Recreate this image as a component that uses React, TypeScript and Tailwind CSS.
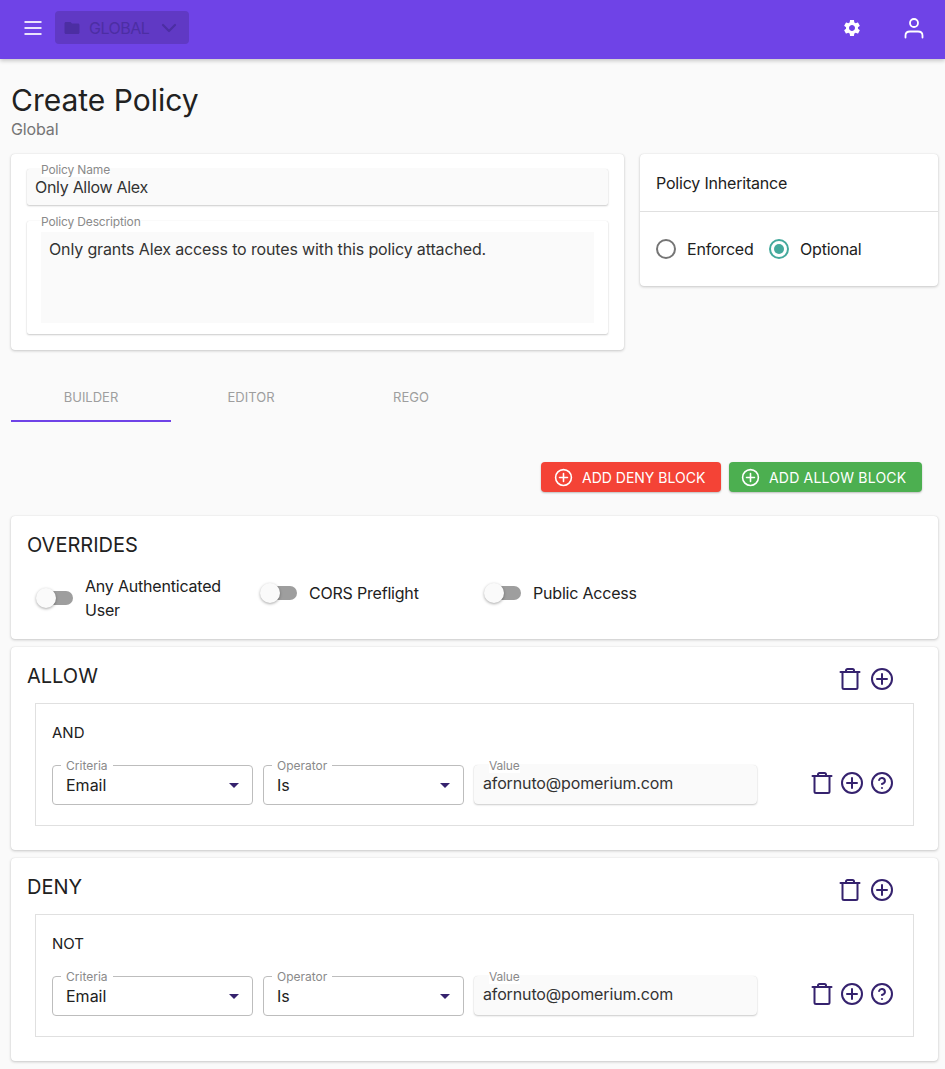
/** Create Policy page — policy builder form. */

import type { ReactNode } from 'react';

const CARD = 'bg-white rounded-[4px] shadow-[0_1px_3px_rgba(0,0,0,0.2),0_0_1px_rgba(0,0,0,0.14)]';
const FIELD_SHADOW = 'shadow-[0_1px_2px_rgba(0,0,0,0.2),0_0_1px_rgba(0,0,0,0.12)]';
const ICON_COLOR = '#35226e';

function TrashIcon() {
  return (
    <svg width="24" height="24" viewBox="0 0 24 24" fill="none" stroke={ICON_COLOR} strokeWidth="2" strokeLinecap="round" strokeLinejoin="round">
      <path d="M2.500 5h19" />
      <path d="M8 5V3.500C8 2.700 8.700 2 9.500 2h5c.8 0 1.500.7 1.500 1.500V5" />
      <path d="M4.500 5v15.500c0 .8.7 1.500 1.500 1.500h12c.8 0 1.500-.7 1.500-1.500V5" />
    </svg>
  );
}

function PlusCircleIcon({ color = ICON_COLOR, size = 24 }: { color?: string; size?: number }) {
  return (
    <svg width={size} height={size} viewBox="0 0 24 24" fill="none" stroke={color} strokeWidth="2" strokeLinecap="round">
      <circle cx="12" cy="12" r="10" />
      <path d="M12 7v10M7 12h10" />
    </svg>
  );
}

function HelpIcon() {
  return (
    <svg width="24" height="24" viewBox="0 0 24 24" fill="none" stroke={ICON_COLOR} strokeWidth="2" strokeLinecap="round" strokeLinejoin="round">
      <circle cx="12" cy="12" r="10" />
      <path d="M9.090 9a3 3 0 0 1 5.830 1c0 2-3 3-3 3" />
      <path d="M12 17h.01" />
    </svg>
  );
}

function Header() {
  return (
    <header className="h-[59px] pb-[4px] bg-[#6f43e7] shadow-[0_2px_4px_rgba(0,0,0,0.2)] flex items-center relative">
      <svg className="ml-[21px]" width="24" height="24" viewBox="0 0 24 24" fill="none" stroke="#e9e2fc" strokeWidth="2">
        <path d="M3.500 6h17M3.500 12h17M3.500 18h17" />
      </svg>
      <div className="ml-[10px] w-[134px] h-[33px] rounded-[4px] bg-[#6039c4] flex items-center text-[#4c2ea3]">
        <svg className="ml-[8px]" width="18" height="18" viewBox="0 0 24 24" fill="#4c2ea3">
          <path d="M10 4H4c-1.100 0-2 .9-2 2v12c0 1.100.9 2 2 2h16c1.100 0 2-.9 2-2V8c0-1.100-.9-2-2-2h-8l-2-2z" />
        </svg>
        <span className="ml-[8px] text-[16px] tracking-[-0.5px]">GLOBAL</span>
        <svg className="ml-[8px]" width="24" height="24" viewBox="0 0 24 24" fill="none" stroke="#4c2ea3" strokeWidth="2.200" strokeLinecap="round" strokeLinejoin="round">
          <path d="M6 9l6 6 6-6" />
        </svg>
      </div>
      <div className="ml-auto mr-[19px] flex items-center gap-[40px]">
        <svg width="20" height="20" viewBox="0 0 24 24" fill="#ffffff">
          <path d="M19.140 12.940c.04-.3.06-.61.06-.94 0-.32-.02-.64-.07-.94l2.030-1.580c.18-.14.23-.41.12-.61l-1.920-3.320c-.12-.22-.37-.29-.59-.22l-2.390.96c-.5-.38-1.030-.7-1.620-.94l-.36-2.540c-.04-.24-.24-.41-.48-.41h-3.840c-.24 0-.43.17-.47.41l-.36 2.540c-.59.24-1.130.57-1.620.94l-2.390-.96c-.22-.08-.47 0-.59.22L2.740 8.870c-.12.21-.08.47.12.61l2.030 1.580c-.05.3-.09.63-.09.94s.02.64.07.94l-2.030 1.580c-.18.14-.23.41-.12.61l1.920 3.320c.12.22.37.29.59.22l2.390-.96c.5.38 1.030.7 1.620.94l.36 2.540c.05.24.24.41.48.41h3.840c.24 0 .44-.17.47-.41l.36-2.540c.59-.24 1.130-.56 1.620-.94l2.390.96c.22.08.47 0 .59-.22l1.920-3.320c.12-.22.07-.47-.12-.61l-2.010-1.580zM12 15.600c-1.980 0-3.600-1.620-3.600-3.600s1.620-3.600 3.600-3.600 3.600 1.620 3.600 3.600-1.620 3.600-3.600 3.600z" />
        </svg>
        <svg width="24" height="24" viewBox="0 0 24 24" fill="none" stroke="#ffffff" strokeWidth="1.800" strokeLinecap="round" strokeLinejoin="round">
          <circle cx="12" cy="7" r="4" />
          <path d="M3.500 21.500v-2c0-2.500 2-4 4.500-4h8c2.500 0 4.500 1.500 4.500 4v2" />
        </svg>
      </div>
    </header>
  );
}

function FloatingLabel({ children, left = 'left-[14px]' }: { children: ReactNode; left?: string }) {
  return (
    <span className={`absolute ${left} -top-[6px] text-[12px] leading-[14px] tracking-[-0.15px] text-[#8a8a8a] bg-white`}>
      {children}
    </span>
  );
}

function SelectField({ label, value }: { label: string; value: string }) {
  return (
    <div className="relative shrink-0 w-[201px] h-[40px] rounded-[4px] border border-[#bdbdbd] flex items-center justify-between pl-[13px] pr-[13px]">
      <span className="absolute left-[8px] -top-[7px] px-[5px] text-[12px] leading-[14px] text-[#8a8a8a] bg-white">{label}</span>
      <span className="text-[16px] text-[#212121]">{value}</span>
      <svg width="10" height="5" viewBox="0 0 10 5" fill={ICON_COLOR}>
        <path d="M0 0h10L5 5z" />
      </svg>
    </div>
  );
}

function Toggle({ label }: { label: string }) {
  return (
    <div className="w-[224px] min-h-[38px] flex items-center gap-[12px]">
      <div className="relative w-[37px] h-[20px] ml-[1px] shrink-0 flex items-center justify-end">
        <div className="w-[34px] h-[14px] rounded-full bg-[#9e9e9e]" />
        <div className="absolute left-0 top-0 w-[20px] h-[20px] rounded-full bg-[#fafafa] shadow-[0_1px_3px_rgba(0,0,0,0.35)]" />
      </div>
      <span className="w-[150px] text-[16px] leading-[24px] tracking-[-0.2px] text-[#212121]">{label}</span>
    </div>
  );
}

function RuleBlock({ title, group, email }: { title: string; group: string; email: string }) {
  return (
    <section className={`${CARD} h-[203px] px-[24px]`}>
      <div className="h-[56px] flex items-start justify-between">
        <h2 className="-ml-[8px] mt-[15px] text-[20px] leading-[28px] text-[#212121]">{title}</h2>
        <div className="mt-[20px] mr-[20px] flex gap-[8px]">
          <TrashIcon />
          <PlusCircleIcon />
        </div>
      </div>
      <div className="h-[123px] border border-[#e0e0e0] px-[16px]">
        <div className="mt-[19px] text-[15px] leading-[20px] text-[#212121]">{group}</div>
        <div className="mt-[22px] flex items-start gap-[10px]">
          <SelectField label="Criteria" value="Email" />
          <SelectField label="Operator" value="Is" />
          <div className={`relative shrink-0 w-[283px] h-[39px] rounded-[4px] bg-[#fafafa] ${FIELD_SHADOW} flex items-center pl-[9px]`}>
            <FloatingLabel left="left-[15px]">Value</FloatingLabel>
            <span className="text-[16px] tracking-[-0.14px] text-[#333333] -mt-[3px]">{email}</span>
          </div>
          <div className="ml-[43px] mt-[6px] flex gap-[6px]">
            <TrashIcon />
            <PlusCircleIcon />
            <HelpIcon />
          </div>
        </div>
      </div>
    </section>
  );
}

export default function App() {
  return (
    <div className="min-h-[1069px] bg-[#fafafa] font-['Inter','Liberation_Sans',sans-serif] overflow-hidden">
      <Header />
      <main className="pl-[11px] pr-[7px]">
        {/* Title */}
        <h1 className="mt-[21px] text-[30px] leading-[40px] text-[#212121]">Create Policy</h1>
        <div className="text-[16px] leading-[19px] tracking-[-0.14px] text-[#757575]">Global</div>

        {/* Name + inheritance */}
        <div className="mt-[15px] flex items-start gap-[16px]">
          <section className={`${CARD} w-[613px] h-[196px] px-[16px] pt-[15px]`}>
            <div className={`relative h-[36px] rounded-[2px] bg-[#fafafa] ${FIELD_SHADOW} flex items-center pl-[8px]`}>
              <FloatingLabel>Policy Name</FloatingLabel>
              <span className="text-[16px] tracking-[-0.3px] text-[#333333]">Only Allow Alex</span>
            </div>
            <div className={`relative mt-[16px] h-[113px] rounded-[2px] bg-white ${FIELD_SHADOW} px-[14px] pt-[11px]`}>
              <FloatingLabel>Policy Description</FloatingLabel>
              <div className="h-[91px] bg-[#fafafa] px-[8px] py-[5px] text-[16px] leading-[24px] tracking-[-0.14px] text-[#333333]">
                Only grants Alex access to routes with this policy attached.
              </div>
            </div>
          </section>
          <section className={`${CARD} w-[298px] h-[132px]`}>
            <div className="h-[58px] border-b border-[#e0e0e0] flex items-center pl-[16px] text-[16px] tracking-[-0.2px] text-[#212121]">
              Policy Inheritance
            </div>
            <div className="h-[74px] flex items-center pl-[16px] text-[16px] tracking-[-0.2px] text-[#212121]">
              <span className="w-[20px] h-[20px] rounded-full border-2 border-[#757575]" />
              <span className="ml-[11px] w-[82px]">Enforced</span>
              <span className="w-[20px] h-[20px] rounded-full border-2 border-[#44a99c] flex items-center justify-center">
                <span className="w-[10px] h-[10px] rounded-full bg-[#44a99c]" />
              </span>
              <span className="ml-[11px]">Optional</span>
            </div>
          </section>
        </div>

        {/* Tabs */}
        <div className="mt-[25px] flex text-[13px] text-[#9e9e9e]">
          <div className="w-[160px] h-[47px] pt-[1px] flex items-center justify-center border-b-2 border-[#6f43e7]">BUILDER</div>
          <div className="w-[160px] h-[47px] pt-[1px] flex items-center justify-center border-b-2 border-transparent">EDITOR</div>
          <div className="w-[160px] h-[47px] pt-[1px] flex items-center justify-center border-b-2 border-transparent">REGO</div>
        </div>

        {/* Actions */}
        <div className="mt-[40px] mr-[16px] flex justify-end gap-[8px] text-[14px] text-white">
          <button className="w-[180px] h-[30px] rounded-[4px] bg-[#f44336] shadow-[0_1px_2px_rgba(0,0,0,0.25)] flex items-center gap-[9px] pl-[13px]">
            <PlusCircleIcon color="#ffffff" size={19} />
            ADD DENY BLOCK
          </button>
          <button className="w-[193px] h-[30px] rounded-[4px] bg-[#4caf50] shadow-[0_1px_2px_rgba(0,0,0,0.25)] flex items-center gap-[9px] pl-[12px] tracking-[0.2px]">
            <PlusCircleIcon color="#ffffff" size={19} />
            ADD ALLOW BLOCK
          </button>
        </div>

        {/* Overrides */}
        <section className={`${CARD} mt-[24px] h-[123px] px-[16px] pt-[15px]`}>
          <h2 className="text-[20px] leading-[28px] text-[#212121]">OVERRIDES</h2>
          <div className="mt-[15px] pl-[8px] flex items-start">
            <Toggle label="Any Authenticated User" />
            <Toggle label="CORS Preflight" />
            <Toggle label="Public Access" />
          </div>
        </section>

        <div className="mt-[8px] flex flex-col gap-[8px]">
          <RuleBlock title="ALLOW" group="AND" email="afornuto@pomerium.com" />
          <RuleBlock title="DENY" group="NOT" email="afornuto@pomerium.com" />
        </div>
      </main>
    </div>
  );
}
